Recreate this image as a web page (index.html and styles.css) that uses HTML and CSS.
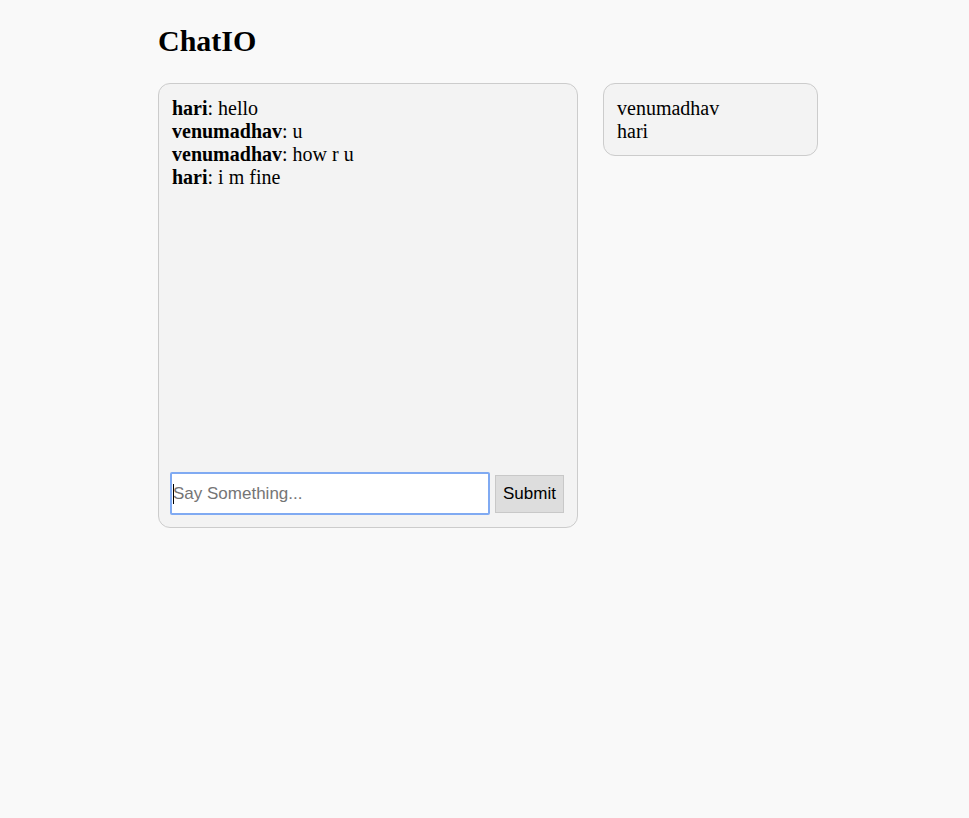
FILE: index.html
```html
<!DOCTYPE html>
<html>
<head>
<meta charset="utf-8">
<title>ChatIO</title>
<link rel="stylesheet" href="styles.css">
</head>
<body>
<div class="page">
  <h1 class="title">ChatIO</h1>
  <div class="layout">
    <div class="chat">
      <div class="messages">
        <div class="msg"><b>hari</b>: hello</div>
        <div class="msg"><b>venumadhav</b>: u</div>
        <div class="msg"><b>venumadhav</b>: how r u</div>
        <div class="msg"><b>hari</b>: i m fine</div>
      </div>
      <form class="composer">
        <span class="field-wrap">
          <input class="field" type="text" placeholder="Say Something...">
          <span class="caret"></span>
        </span>
        <button class="submit" type="button">Submit</button>
      </form>
    </div>
    <div class="users">
      <div class="user">venumadhav</div>
      <div class="user">hari</div>
    </div>
  </div>
</div>
</body>
</html>
```
FILE: styles.css
```css
html, body {
  margin: 0;
  padding: 0;
  background: #f9f9f9;
  font-family: "Liberation Serif", "Times New Roman", serif;
  color: #000;
}
.page {
  width: 660px;
  margin-left: 158px;
  padding-top: 26px;
}
.title {
  margin: 0;
  font-size: 30px;
  line-height: 30px;
  font-weight: bold;
}
.layout {
  display: flex;
  align-items: flex-start;
  gap: 25px;
  margin-top: 27px;
}
.chat {
  width: 418px;
  height: 443px;
  border: 1px solid #cccccc;
  border-radius: 12px;
  background: #f3f3f3;
  display: flex;
  flex-direction: column;
  justify-content: space-between;
}
.messages {
  padding: 13px 13px 0 13px;
  font-size: 20px;
  line-height: 23px;
}
.composer {
  display: flex;
  align-items: center;
  gap: 5px;
  margin: 0 0 12px 11px;
}
.field-wrap {
  position: relative;
  display: block;
  width: 320px;
  height: 43px;
}
.field {
  display: block;
  width: 320px;
  height: 43px;
  box-sizing: border-box;
  border: 2px solid #80aaf2;
  border-radius: 2px;
  background: #fff;
  margin: 0;
  padding: 0 0 0 1px;
  font-family: "Liberation Sans", Arial, sans-serif;
  font-size: 17px;
  outline: none;
}
.field::placeholder {
  color: #757575;
}
.caret {
  position: absolute;
  left: 3px;
  top: 12px;
  width: 1px;
  height: 20px;
  background: #000;
}
.submit {
  width: 69px;
  height: 38px;
  box-sizing: border-box;
  border: 1px solid #c8c8c8;
  background: #dddddd;
  font-family: "Liberation Sans", Arial, sans-serif;
  font-size: 17px;
  color: #000;
  padding: 0;
}
.users {
  width: 187px;
  border: 1px solid #cccccc;
  border-radius: 12px;
  background: #f3f3f3;
  padding: 13px 13px 12px;
  font-size: 20px;
  line-height: 23px;
}
```
